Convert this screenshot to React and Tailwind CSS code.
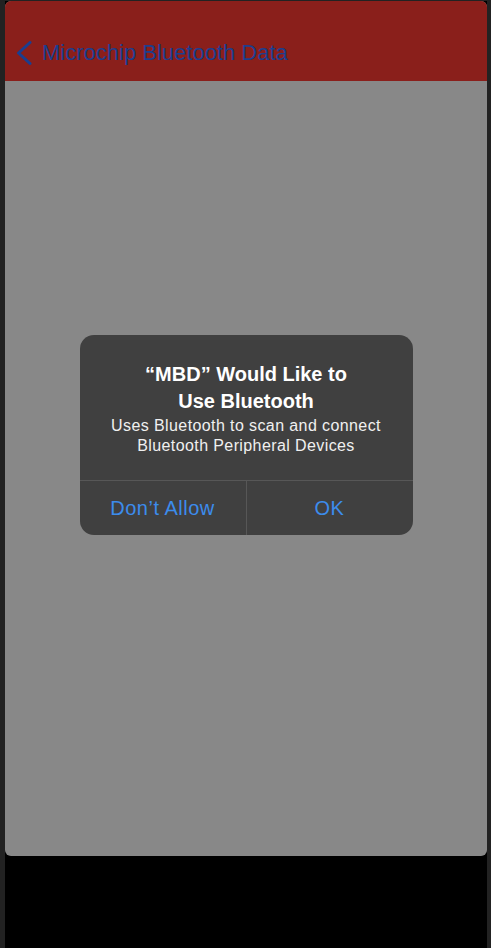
export default function App() {
  return (
    <div
      className="w-[491px] h-[948px] bg-[#222222] pl-[5px] pr-[4px] pt-[1px] flex flex-col"
      style={{ fontFamily: '"Liberation Sans", Arial, sans-serif' }}
    >
      <div className="flex-1 bg-black flex flex-col">
        <div className="h-[855px] rounded-[6px] overflow-hidden flex flex-col bg-[#888888]">
          <div className="h-[80px] bg-[#8a1f1b] flex items-end pb-[15px] pl-[11px]">
            <div className="h-[26px] flex items-center gap-[10px]">
              <svg width="16" height="24" viewBox="0 0 16 24" fill="none">
                <polyline
                  points="14,1.5 2.5,12 14,22.5"
                  stroke="#1b3e8f"
                  strokeWidth="3"
                  strokeLinecap="round"
                  strokeLinejoin="round"
                />
              </svg>
              <span className="text-[22px] leading-[26px] text-[#1b3e8f]">
                Microchip Bluetooth Data
              </span>
            </div>
          </div>
          <div className="flex-1 pt-[254px] flex flex-col items-center">
            <div className="w-[333px] h-[200px] bg-[#404040] rounded-[14px] flex flex-col overflow-hidden">
              <div className="pt-[26px] pb-[24px] px-[16px] flex flex-col items-center text-center text-white">
                <div className="text-[20px] leading-[27px] font-bold">
                  “MBD” Would Like to
                  <br />
                  Use Bluetooth
                </div>
                <div className="mt-[1px] text-[16px] leading-[20px] tracking-[0.025em] text-[#f0f0f0]">
                  Uses Bluetooth to scan and connect
                  <br />
                  Bluetooth Peripheral Devices
                </div>
              </div>
              <div className="h-px bg-[#575757]" />
              <div className="flex-1 flex">
                <div className="flex-1 flex items-center justify-center text-[20px] leading-none tracking-[0.025em] text-[#3c8cec]">
                  Don’t Allow
                </div>
                <div className="w-px bg-[#575757]" />
                <div className="flex-1 flex items-center justify-center text-[20px] leading-none tracking-[0.025em] text-[#3c8cec]">
                  OK
                </div>
              </div>
            </div>
          </div>
        </div>
      </div>
    </div>
  );
}
